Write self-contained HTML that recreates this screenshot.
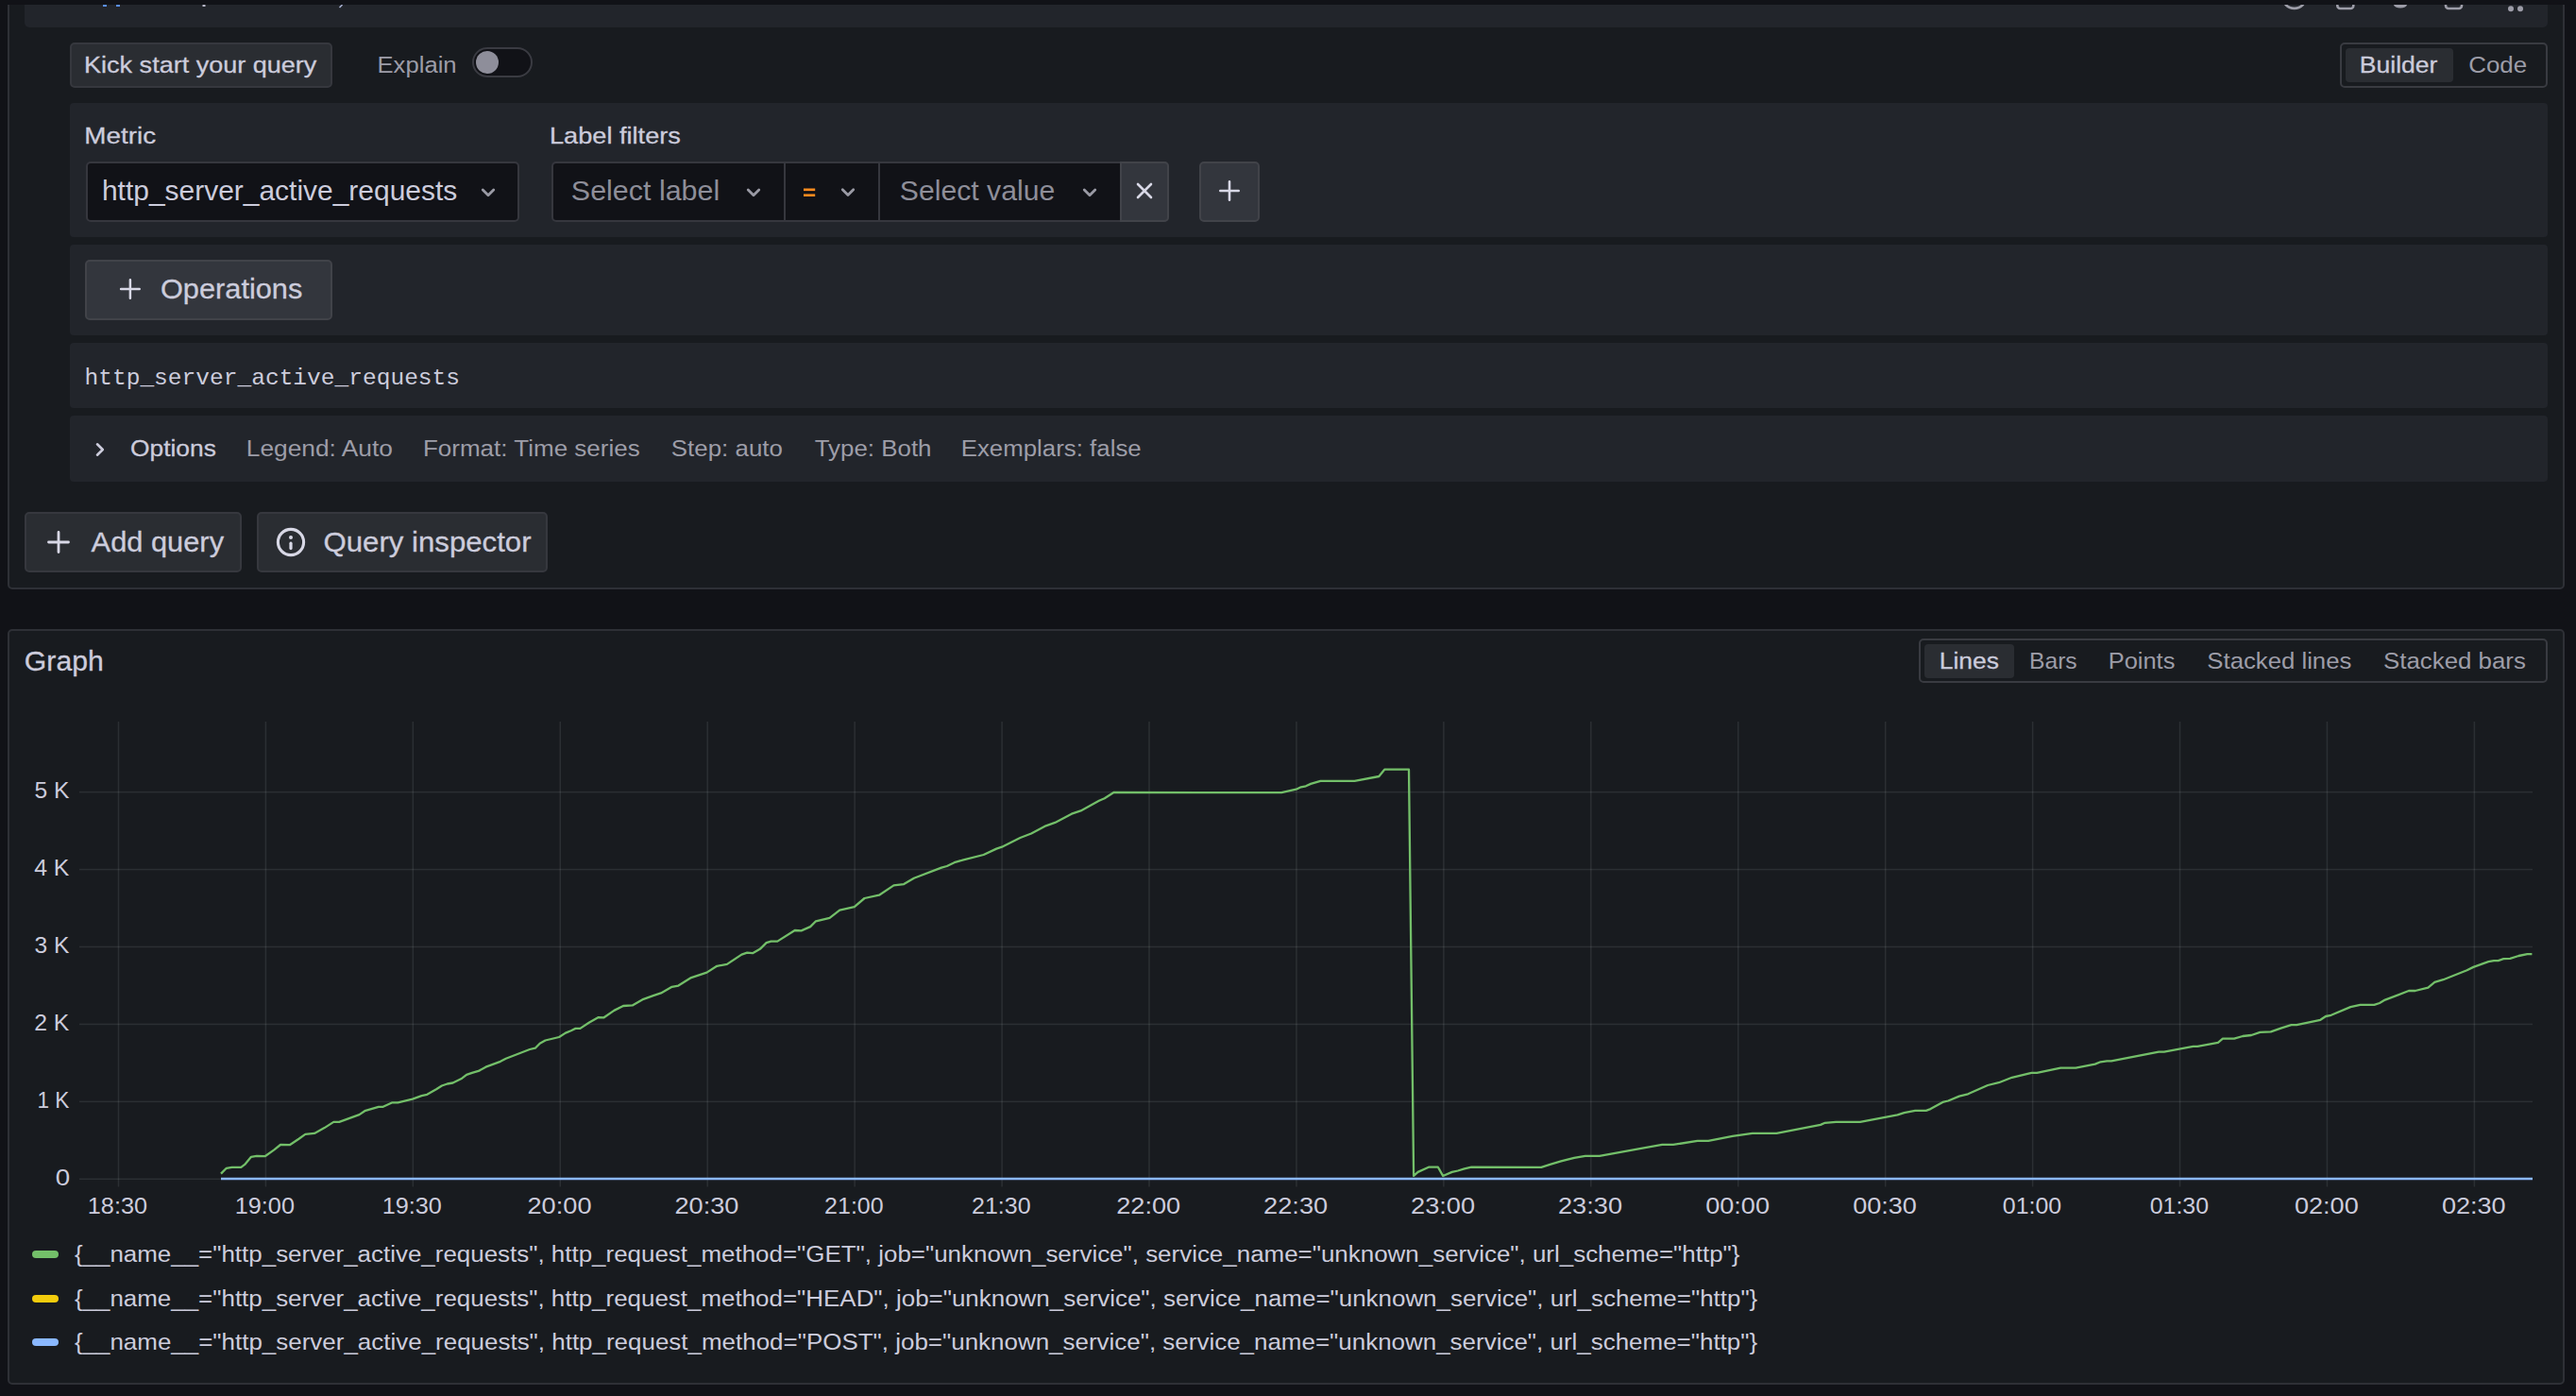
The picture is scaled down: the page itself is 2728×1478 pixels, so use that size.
<!DOCTYPE html>
<html><head><meta charset="utf-8"><title>Explore</title>
<style>
html,body{margin:0;padding:0;background:#111217;width:2728px;height:1478px;overflow:hidden;}
svg{display:block;}
</style></head><body>
<svg width="2728" height="1478" viewBox="0 0 2728 1478">
<rect x="0" y="0" width="2728" height="1478" fill="#111217"/>
<rect x="9.0" y="-19.0" width="2706" height="642" rx="4" fill="#181b1f" stroke="#2e3036" stroke-width="2"/>
<rect x="9.0" y="667.0" width="2706" height="798" rx="4" fill="#181b1f" stroke="#2e3036" stroke-width="2"/>
<rect x="0" y="0" width="2728" height="5" fill="#111217"/>
<rect x="26" y="-20" width="2672" height="49" rx="5" fill="#22252b"/>
<rect x="26" y="5" width="2672" height="1" fill="#22252b"/>
<rect x="109" y="5" width="4" height="2" fill="#5a8ef0"/>
<rect x="123" y="5" width="4" height="2" fill="#5a8ef0"/>
<rect x="214.5" y="5" width="3" height="2" fill="#b8b8c8"/>
<path d="M359.5 8 L362.5 5" stroke="#a8b0d0" stroke-width="1.6"/>
<circle cx="2429.7" cy="-3.6" r="12.5" fill="none" stroke="#9d9da8" stroke-width="2.6"/>
<path d="M2475.3 0 V6 a3 3 0 0 0 3 3 h11 a3 3 0 0 0 3 -3 V0" fill="none" stroke="#9d9da8" stroke-width="2.6"/>
<path d="M2535 5 A 7 3.5 0 0 0 2549 5 Z" fill="#9d9da8"/>
<path d="M2590 0 V6 a3 3 0 0 0 3 3 h11 a3 3 0 0 0 3 -3 V0" fill="none" stroke="#9d9da8" stroke-width="2.6"/>
<circle cx="2659" cy="9.3" r="3" fill="#9d9da8"/><circle cx="2669" cy="9.3" r="3" fill="#9d9da8"/>
<rect x="0" y="0" width="2728" height="5" fill="#111217"/>
<rect x="75.0" y="46.0" width="276" height="46" rx="4" fill="#2a2d32" stroke="#36383e" stroke-width="2"/>
<text transform="translate(89.10,77.00) scale(1.0981,1)" font-family='"Liberation Sans", sans-serif' font-size="24.6" fill="#ccccdc" stroke="#ccccdc" stroke-width="0.3">Kick start your query</text>
<text transform="translate(399.51,77.00) scale(1.0428,1)" font-family='"Liberation Sans", sans-serif' font-size="24.6" fill="#9d9da8">Explain</text>
<rect x="501" y="51" width="62" height="30" rx="15" fill="#111217" stroke="#3a3b42" stroke-width="2"/>
<circle cx="516" cy="66" r="12" fill="#8e8e9a"/>
<rect x="2479.0" y="46.0" width="218" height="46" rx="4" fill="#181b1f" stroke="#393b41" stroke-width="2"/>
<rect x="2484" y="51" width="114" height="36" rx="4" fill="#2a2d32"/>
<text transform="translate(2498.84,77.00) scale(1.0782,1)" font-family='"Liberation Sans", sans-serif' font-size="24.6" fill="#ccccdc" stroke="#ccccdc" stroke-width="0.3">Builder</text>
<text transform="translate(2614.24,77.00) scale(1.0531,1)" font-family='"Liberation Sans", sans-serif' font-size="24.6" fill="#9d9da8">Code</text>
<rect x="74" y="109" width="2624" height="142" rx="4" fill="#22252b"/>
<text transform="translate(89.34,152.00) scale(1.1304,1)" font-family='"Liberation Sans", sans-serif' font-size="24.6" fill="#ccccdc" stroke="#ccccdc" stroke-width="0.3">Metric</text>
<text transform="translate(581.99,152.00) scale(1.1041,1)" font-family='"Liberation Sans", sans-serif' font-size="24.6" fill="#ccccdc" stroke="#ccccdc" stroke-width="0.3">Label filters</text>
<rect x="92.0" y="172.0" width="457" height="62" rx="4" fill="#111217" stroke="#36373e" stroke-width="2"/>
<text transform="translate(107.92,212.00) scale(1.0410,1)" font-family='"Liberation Sans", sans-serif' font-size="28.8" fill="#ccccdc">http_server_active_requests</text>
<path d="M511.25 201.05 L517 206.8 L522.75 201.05" fill="none" stroke="#9a9aa5" stroke-width="2.8" stroke-linecap="round" stroke-linejoin="round"/>
<rect x="585" y="172" width="652" height="62" rx="4" fill="#111217" stroke="#36373e" stroke-width="2"/>
<rect x="830" y="172" width="2" height="62" fill="#36373e"/>
<rect x="930" y="172" width="2" height="62" fill="#36373e"/>
<path d="M1187 172 H1233 a4 4 0 0 1 4 4 V230 a4 4 0 0 1 -4 4 H1187 Z" fill="#33363d" stroke="#414349" stroke-width="2"/>
<text transform="translate(604.86,212.00) scale(1.0322,1)" font-family='"Liberation Sans", sans-serif' font-size="29.5" fill="#8e8e99">Select label</text>
<path d="M792.25 201.05 L798 206.8 L803.75 201.05" fill="none" stroke="#9a9aa5" stroke-width="2.8" stroke-linecap="round" stroke-linejoin="round"/>
<rect x="851" y="199.5" width="12.2" height="2.6" fill="#ff8a1e"/><rect x="851" y="205.4" width="12.2" height="2.6" fill="#ff8a1e"/>
<path d="M892.25 200.85 L898 206.6 L903.75 200.85" fill="none" stroke="#9a9aa5" stroke-width="2.8" stroke-linecap="round" stroke-linejoin="round"/>
<text transform="translate(952.87,212.00) scale(1.0228,1)" font-family='"Liberation Sans", sans-serif' font-size="29.5" fill="#8e8e99">Select value</text>
<path d="M1148.25 201.05 L1154 206.8 L1159.75 201.05" fill="none" stroke="#9a9aa5" stroke-width="2.8" stroke-linecap="round" stroke-linejoin="round"/>
<path d="M1205 195 L1219 209 M1219 195 L1205 209" stroke="#d8d8e6" stroke-width="2.6" stroke-linecap="round"/>
<rect x="1271.0" y="172.0" width="62" height="62" rx="4" fill="#33363d" stroke="#414349" stroke-width="2"/>
<path d="M1302 192.3 V211.7 M1292.3 202 H1311.7" stroke="#d8d8e6" stroke-width="2.6" stroke-linecap="round"/>
<rect x="74" y="259" width="2624" height="96" rx="4" fill="#22252b"/>
<rect x="91.0" y="276.0" width="260" height="62" rx="4" fill="#33363d" stroke="#414349" stroke-width="2"/>
<path d="M137.9 296.2 V315.8 M128.1 306 H147.7" stroke="#d8d8e6" stroke-width="2.5" stroke-linecap="round"/>
<text transform="translate(169.95,316.00) scale(1.0423,1)" font-family='"Liberation Sans", sans-serif' font-size="29.5" fill="#ccccdc" stroke="#ccccdc" stroke-width="0.3">Operations</text>
<rect x="74" y="363" width="2624" height="69" rx="4" fill="#22252b"/>
<text transform="translate(89.51,407.00) scale(0.9977,1)" font-family='"Liberation Mono", monospace' font-size="24.6" fill="#ccccdc">http_server_active_requests</text>
<rect x="74" y="440" width="2624" height="70" rx="4" fill="#22252b"/>
<path d="M103 470.3 L108.8 476 L103 481.7" fill="none" stroke="#ccccdc" stroke-width="2.6" stroke-linecap="round" stroke-linejoin="round"/>
<text transform="translate(138.02,483.00) scale(1.0712,1)" font-family='"Liberation Sans", sans-serif' font-size="24.6" fill="#ccccdc" stroke="#ccccdc" stroke-width="0.3">Options</text>
<text transform="translate(260.76,483.00) scale(1.0711,1)" font-family='"Liberation Sans", sans-serif' font-size="24.6" fill="#9d9da8">Legend: Auto</text>
<text transform="translate(447.88,483.00) scale(1.0583,1)" font-family='"Liberation Sans", sans-serif' font-size="24.6" fill="#9d9da8">Format: Time series</text>
<text transform="translate(710.84,483.00) scale(1.0536,1)" font-family='"Liberation Sans", sans-serif' font-size="24.6" fill="#9d9da8">Step: auto</text>
<text transform="translate(862.67,483.00) scale(1.0537,1)" font-family='"Liberation Sans", sans-serif' font-size="24.6" fill="#9d9da8">Type: Both</text>
<text transform="translate(1017.70,483.00) scale(1.0509,1)" font-family='"Liberation Sans", sans-serif' font-size="24.6" fill="#9d9da8">Exemplars: false</text>
<rect x="27.0" y="543.0" width="228" height="62" rx="4" fill="#2a2d32" stroke="#36383e" stroke-width="2"/>
<path d="M62 563.5 V584.5 M51.5 574 H72.5" stroke="#d8d8e6" stroke-width="2.8" stroke-linecap="round"/>
<text transform="translate(96.60,584.00) scale(1.0446,1)" font-family='"Liberation Sans", sans-serif' font-size="29.5" fill="#ccccdc" stroke="#ccccdc" stroke-width="0.3">Add query</text>
<rect x="273.0" y="543.0" width="306" height="62" rx="4" fill="#2a2d32" stroke="#36383e" stroke-width="2"/>
<circle cx="308" cy="574" r="13.6" fill="none" stroke="#d8d8e6" stroke-width="3.1"/>
<circle cx="308" cy="569.1" r="2" fill="#d8d8e6"/><path d="M308 575.2 V580.6" stroke="#d8d8e6" stroke-width="3.2" stroke-linecap="round"/>
<text transform="translate(342.53,584.00) scale(1.0571,1)" font-family='"Liberation Sans", sans-serif' font-size="29.5" fill="#ccccdc" stroke="#ccccdc" stroke-width="0.3">Query inspector</text>
<text transform="translate(25.87,710.00) scale(1.0229,1)" font-family='"Liberation Sans", sans-serif' font-size="29.5" fill="#ccccdc" stroke="#ccccdc" stroke-width="0.3">Graph</text>
<rect x="2033.0" y="677.0" width="664" height="45" rx="4" fill="#181b1f" stroke="#393b41" stroke-width="2"/>
<rect x="2038" y="682" width="95" height="36" rx="4" fill="#2a2d32"/>
<text transform="translate(2053.86,708.00) scale(1.0714,1)" font-family='"Liberation Sans", sans-serif' font-size="24.6" fill="#ccccdc" stroke="#ccccdc" stroke-width="0.3">Lines</text>
<text transform="translate(2149.00,708.00) scale(1.0021,1)" font-family='"Liberation Sans", sans-serif' font-size="24.6" fill="#9d9da8">Bars</text>
<text transform="translate(2232.73,708.00) scale(1.0335,1)" font-family='"Liberation Sans", sans-serif' font-size="24.6" fill="#9d9da8">Points</text>
<text transform="translate(2337.35,708.00) scale(1.0464,1)" font-family='"Liberation Sans", sans-serif' font-size="24.6" fill="#9d9da8">Stacked lines</text>
<text transform="translate(2524.04,708.00) scale(1.0508,1)" font-family='"Liberation Sans", sans-serif' font-size="24.6" fill="#9d9da8">Stacked bars</text>
<rect x="124.75" y="764" width="1.5" height="492.5" fill="rgba(240,250,255,0.09)"/>
<rect x="280.68" y="764" width="1.5" height="492.5" fill="rgba(240,250,255,0.09)"/>
<rect x="436.61" y="764" width="1.5" height="492.5" fill="rgba(240,250,255,0.09)"/>
<rect x="592.54" y="764" width="1.5" height="492.5" fill="rgba(240,250,255,0.09)"/>
<rect x="748.47" y="764" width="1.5" height="492.5" fill="rgba(240,250,255,0.09)"/>
<rect x="904.40" y="764" width="1.5" height="492.5" fill="rgba(240,250,255,0.09)"/>
<rect x="1060.33" y="764" width="1.5" height="492.5" fill="rgba(240,250,255,0.09)"/>
<rect x="1216.26" y="764" width="1.5" height="492.5" fill="rgba(240,250,255,0.09)"/>
<rect x="1372.19" y="764" width="1.5" height="492.5" fill="rgba(240,250,255,0.09)"/>
<rect x="1528.12" y="764" width="1.5" height="492.5" fill="rgba(240,250,255,0.09)"/>
<rect x="1684.05" y="764" width="1.5" height="492.5" fill="rgba(240,250,255,0.09)"/>
<rect x="1839.98" y="764" width="1.5" height="492.5" fill="rgba(240,250,255,0.09)"/>
<rect x="1995.91" y="764" width="1.5" height="492.5" fill="rgba(240,250,255,0.09)"/>
<rect x="2151.84" y="764" width="1.5" height="492.5" fill="rgba(240,250,255,0.09)"/>
<rect x="2307.77" y="764" width="1.5" height="492.5" fill="rgba(240,250,255,0.09)"/>
<rect x="2463.70" y="764" width="1.5" height="492.5" fill="rgba(240,250,255,0.09)"/>
<rect x="2619.63" y="764" width="1.5" height="492.5" fill="rgba(240,250,255,0.09)"/>
<rect x="84" y="1247.55" width="2598" height="1.5" fill="rgba(240,250,255,0.09)"/>
<rect x="84" y="1165.61" width="2598" height="1.5" fill="rgba(240,250,255,0.09)"/>
<rect x="84" y="1083.67" width="2598" height="1.5" fill="rgba(240,250,255,0.09)"/>
<rect x="84" y="1001.73" width="2598" height="1.5" fill="rgba(240,250,255,0.09)"/>
<rect x="84" y="919.79" width="2598" height="1.5" fill="rgba(240,250,255,0.09)"/>
<rect x="84" y="837.85" width="2598" height="1.5" fill="rgba(240,250,255,0.09)"/>
<text transform="translate(58.79,1255.00) scale(1.1261,1)" font-family='"Liberation Sans", sans-serif' font-size="24.6" fill="#ccccdc">0</text>
<text transform="translate(39.44,1173.00) scale(0.9198,1)" font-family='"Liberation Sans", sans-serif' font-size="24.6" fill="#ccccdc">1 K</text>
<text transform="translate(36.19,1091.00) scale(1.0085,1)" font-family='"Liberation Sans", sans-serif' font-size="24.6" fill="#ccccdc">2 K</text>
<text transform="translate(36.50,1009.00) scale(1.0000,1)" font-family='"Liberation Sans", sans-serif' font-size="24.6" fill="#ccccdc">3 K</text>
<text transform="translate(36.20,927.00) scale(1.0083,1)" font-family='"Liberation Sans", sans-serif' font-size="24.6" fill="#ccccdc">4 K</text>
<text transform="translate(36.50,845.00) scale(1.0000,1)" font-family='"Liberation Sans", sans-serif' font-size="24.6" fill="#ccccdc">5 K</text>
<text transform="translate(92.80,1285.00) scale(1.0272,1)" font-family='"Liberation Sans", sans-serif' font-size="24.6" fill="#ccccdc">18:30</text>
<text transform="translate(248.73,1285.00) scale(1.0272,1)" font-family='"Liberation Sans", sans-serif' font-size="24.6" fill="#ccccdc">19:00</text>
<text transform="translate(404.66,1285.00) scale(1.0272,1)" font-family='"Liberation Sans", sans-serif' font-size="24.6" fill="#ccccdc">19:30</text>
<text transform="translate(558.46,1285.00) scale(1.1059,1)" font-family='"Liberation Sans", sans-serif' font-size="24.6" fill="#ccccdc">20:00</text>
<text transform="translate(714.39,1285.00) scale(1.1059,1)" font-family='"Liberation Sans", sans-serif' font-size="24.6" fill="#ccccdc">20:30</text>
<text transform="translate(873.08,1285.00) scale(1.0168,1)" font-family='"Liberation Sans", sans-serif' font-size="24.6" fill="#ccccdc">21:00</text>
<text transform="translate(1029.01,1285.00) scale(1.0168,1)" font-family='"Liberation Sans", sans-serif' font-size="24.6" fill="#ccccdc">21:30</text>
<text transform="translate(1182.18,1285.00) scale(1.1059,1)" font-family='"Liberation Sans", sans-serif' font-size="24.6" fill="#ccccdc">22:00</text>
<text transform="translate(1338.11,1285.00) scale(1.1059,1)" font-family='"Liberation Sans", sans-serif' font-size="24.6" fill="#ccccdc">22:30</text>
<text transform="translate(1494.04,1285.00) scale(1.1059,1)" font-family='"Liberation Sans", sans-serif' font-size="24.6" fill="#ccccdc">23:00</text>
<text transform="translate(1649.97,1285.00) scale(1.1059,1)" font-family='"Liberation Sans", sans-serif' font-size="24.6" fill="#ccccdc">23:30</text>
<text transform="translate(1806.24,1285.00) scale(1.1003,1)" font-family='"Liberation Sans", sans-serif' font-size="24.6" fill="#ccccdc">00:00</text>
<text transform="translate(1962.17,1285.00) scale(1.1003,1)" font-family='"Liberation Sans", sans-serif' font-size="24.6" fill="#ccccdc">00:30</text>
<text transform="translate(2120.83,1285.00) scale(1.0117,1)" font-family='"Liberation Sans", sans-serif' font-size="24.6" fill="#ccccdc">01:00</text>
<text transform="translate(2276.76,1285.00) scale(1.0117,1)" font-family='"Liberation Sans", sans-serif' font-size="24.6" fill="#ccccdc">01:30</text>
<text transform="translate(2429.96,1285.00) scale(1.1003,1)" font-family='"Liberation Sans", sans-serif' font-size="24.6" fill="#ccccdc">02:00</text>
<text transform="translate(2585.89,1285.00) scale(1.1003,1)" font-family='"Liberation Sans", sans-serif' font-size="24.6" fill="#ccccdc">02:30</text>
<path d="M234 1248 H2682" stroke="#8ab8ff" stroke-width="2.6" fill="none"/>
<path d="M234.0 1242.6 L239.8 1236.8 L245.6 1235.8 L255.3 1235.8 L259.2 1232.9 L266.0 1224.8 L271.8 1223.8 L280.6 1224.2 L290.3 1217.4 L297.0 1212.0 L306.8 1212.2 L316.5 1205.7 L323.3 1200.9 L333.0 1199.9 L343.6 1194.1 L353.3 1187.9 L359.2 1187.9 L380.5 1180.1 L386.3 1176.2 L400.9 1171.8 L405.7 1171.8 L415.5 1167.3 L421.3 1167.3 L436.8 1163.6 L446.5 1160.1 L452.3 1158.8 L462.0 1153.3 L467.9 1149.5 L473.7 1147.5 L479.5 1146.5 L489.2 1141.7 L494.1 1137.8 L499.9 1135.9 L506.7 1133.9 L514.4 1129.7 L530.0 1123.8 L535.8 1120.7 L561.0 1111.0 L566.8 1109.7 L571.7 1104.8 L577.5 1101.5 L592.1 1098.0 L598.9 1093.6 L604.7 1091.2 L609.5 1088.9 L614.4 1088.9 L624.1 1082.5 L633.8 1077.1 L639.6 1077.3 L650.3 1069.9 L660.0 1065.0 L669.7 1064.4 L681.4 1057.8 L691.1 1054.3 L700.0 1051.4 L711.6 1044.8 L718.4 1043.6 L732.0 1035.1 L748.5 1029.6 L759.2 1022.8 L769.9 1020.9 L785.4 1010.6 L791.2 1008.7 L797.0 1009.2 L804.8 1004.8 L811.6 998.2 L816.5 996.6 L823.3 996.6 L841.7 985.0 L848.5 985.4 L858.2 981.1 L864.0 975.3 L878.6 971.8 L889.2 963.6 L904.8 960.1 L915.5 951.0 L931.0 947.7 L946.5 937.4 L957.2 936.1 L967.9 929.7 L997.0 918.6 L1002.8 917.0 L1010.6 913.2 L1020.3 910.3 L1041.6 905.0 L1055.2 898.6 L1061.0 896.7 L1080.4 887.0 L1092.1 882.5 L1107.6 874.3 L1117.3 870.9 L1134.8 861.7 L1144.5 858.4 L1163.9 847.8 L1169.7 845.2 L1179.4 839.0 L1357.1 839.2 L1372.6 835.7 L1377.8 833.3 L1382.9 832.3 L1388.1 829.9 L1398.4 826.8 L1434.5 826.8 L1460.3 822.0 L1466.2 814.7 L1492.0 814.7 L1497.1 1245.0 L1501.6 1240.9 L1512.9 1235.7 L1522.9 1235.7 L1528.1 1245.0 L1537.7 1240.9 L1543.9 1239.5 L1550.8 1237.4 L1558.3 1235.7 L1632.2 1235.9 L1641.5 1232.8 L1653.2 1229.4 L1667.1 1225.9 L1678.8 1223.8 L1693.9 1223.8 L1732.4 1216.8 L1760.3 1211.9 L1772.0 1211.9 L1797.6 1207.9 L1809.2 1207.9 L1834.8 1202.8 L1855.8 1199.8 L1881.4 1199.8 L1928.0 1190.9 L1932.7 1188.8 L1944.3 1187.9 L1969.9 1187.9 L2009.5 1180.4 L2016.5 1178.1 L2028.2 1175.8 L2039.8 1175.8 L2044.5 1174.1 L2057.3 1166.9 L2063.1 1165.5 L2074.8 1160.6 L2084.1 1158.3 L2105.0 1149.0 L2116.7 1146.2 L2130.7 1140.8 L2151.4 1135.8 L2157.1 1135.8 L2182.2 1130.7 L2198.2 1130.7 L2218.7 1126.6 L2224.5 1124.3 L2231.3 1123.4 L2235.9 1123.4 L2286.1 1113.6 L2291.8 1113.6 L2322.6 1107.9 L2327.2 1107.9 L2348.9 1103.8 L2353.9 1099.7 L2366.0 1099.7 L2375.1 1097.0 L2384.2 1096.0 L2393.4 1092.8 L2404.8 1092.4 L2416.2 1088.3 L2426.5 1085.1 L2432.2 1085.1 L2457.3 1079.8 L2463.0 1076.0 L2468.7 1074.8 L2489.2 1066.1 L2499.5 1063.9 L2514.3 1063.9 L2520.0 1062.0 L2525.8 1058.6 L2550.9 1049.0 L2557.7 1049.0 L2571.4 1045.6 L2578.3 1039.9 L2587.4 1037.2 L2612.5 1027.3 L2619.3 1023.9 L2635.3 1018.2 L2641.0 1017.1 L2645.6 1017.1 L2651.3 1015.2 L2658.2 1014.8 L2667.3 1012.0 L2676.4 1010.2 L2681.4 1010.2" stroke="#73bf69" stroke-width="2.3" fill="none" stroke-linejoin="round"/>
<rect x="34" y="1323.9" width="28" height="8.2" rx="4.1" fill="#73bf69"/>
<text transform="translate(78.88,1336.00) scale(1.0550,1)" font-family='"Liberation Sans", sans-serif' font-size="24.6" fill="#ccccdc">{__name__=&quot;http_server_active_requests&quot;, http_request_method=&quot;GET&quot;, job=&quot;unknown_service&quot;, service_name=&quot;unknown_service&quot;, url_scheme=&quot;http&quot;}</text>
<rect x="34" y="1370.9" width="28" height="8.2" rx="4.1" fill="#f2cc0c"/>
<text transform="translate(78.88,1383.00) scale(1.0551,1)" font-family='"Liberation Sans", sans-serif' font-size="24.6" fill="#ccccdc">{__name__=&quot;http_server_active_requests&quot;, http_request_method=&quot;HEAD&quot;, job=&quot;unknown_service&quot;, service_name=&quot;unknown_service&quot;, url_scheme=&quot;http&quot;}</text>
<rect x="34" y="1416.9" width="28" height="8.2" rx="4.1" fill="#8ab8ff"/>
<text transform="translate(78.88,1429.00) scale(1.0554,1)" font-family='"Liberation Sans", sans-serif' font-size="24.6" fill="#ccccdc">{__name__=&quot;http_server_active_requests&quot;, http_request_method=&quot;POST&quot;, job=&quot;unknown_service&quot;, service_name=&quot;unknown_service&quot;, url_scheme=&quot;http&quot;}</text>
</svg>
</body></html>
